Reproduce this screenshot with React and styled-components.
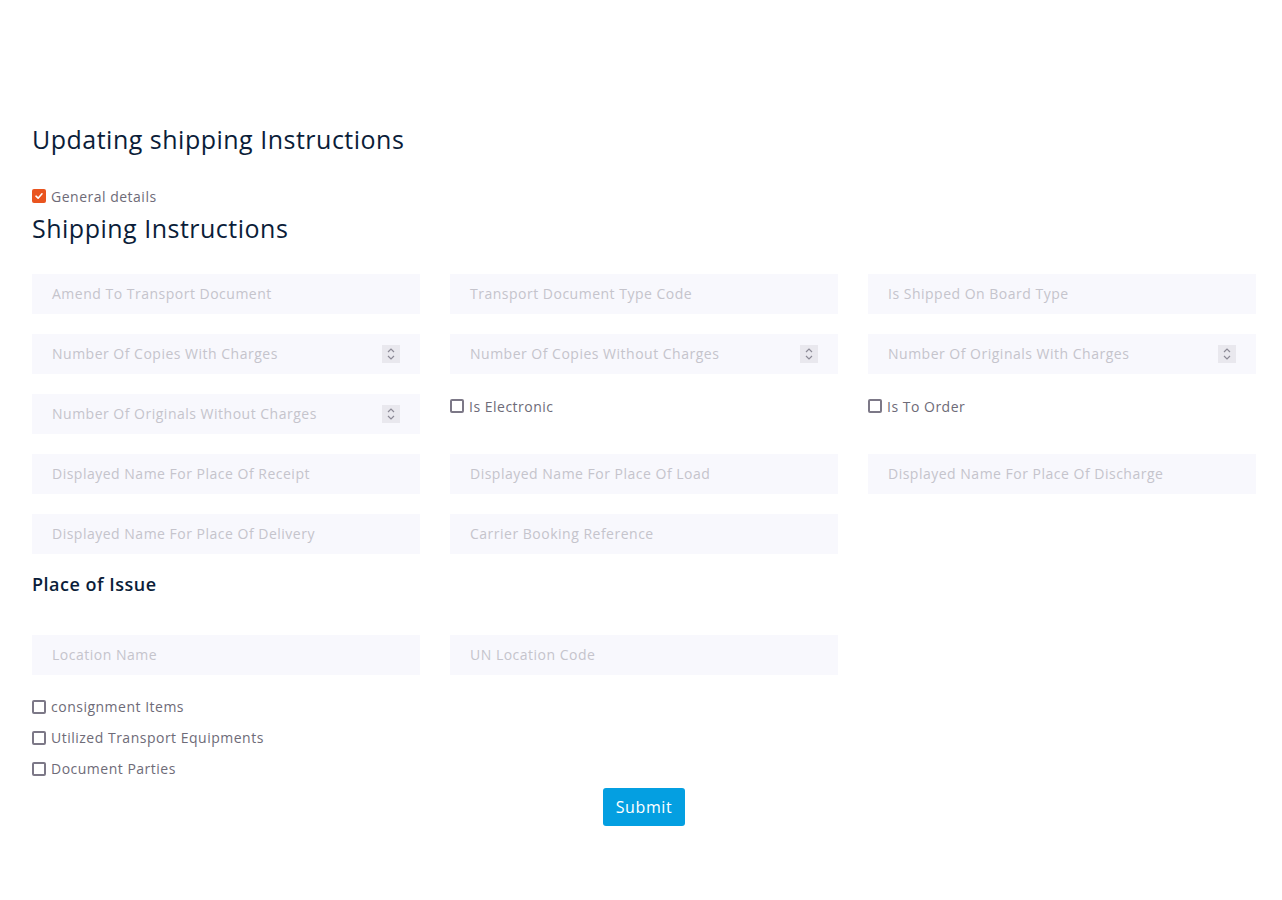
import React from 'react';
import styled, { createGlobalStyle } from 'styled-components';

const GlobalStyle = createGlobalStyle`
  body {
    margin: 0;
    background: #ffffff;
    font-family: "Open Sans", "Liberation Sans", sans-serif;
    letter-spacing: 0.5px;
  }
`;

const Page = styled.div`
  padding: 124px 26px 60px 32px;
`;

const PageTitle = styled.h1`
  margin: 0;
  font-size: 25px;
  line-height: 30px;
  font-weight: 500;
  color: #0b1d39;
`;

const SectionTitle = styled.h2`
  margin: 7px 0 0;
  font-size: 25px;
  line-height: 30px;
  font-weight: 500;
  color: #0b1d39;
`;

const SubTitle = styled.h3`
  margin: 18px 0 0;
  font-size: 18px;
  line-height: 24px;
  font-weight: 600;
  color: #0b1d39;
`;

const CheckRow = styled.label`
  display: flex;
  align-items: center;
  gap: 5px;
  height: ${(p) => p.$h || 31}px;
  font-size: 14px;
  color: #6e6b78;
  margin-top: ${(p) => p.$mt || 0}px;
`;

const Box = styled.span`
  width: 14px;
  height: 14px;
  box-sizing: border-box;
  border-radius: 2px;
  border: ${(p) => (p.$checked ? 'none' : '2px solid #7c7887')};
  background: ${(p) => (p.$checked ? '#e9541f' : 'transparent')};
  display: inline-flex;
  align-items: center;
  justify-content: center;
  flex-shrink: 0;
`;

const Grid = styled.div`
  display: grid;
  grid-template-columns: repeat(3, 388px);
  column-gap: 30px;
  row-gap: 20px;
  margin-top: ${(p) => p.$mt || 0}px;
`;

const Field = styled.div`
  height: 40px;
  box-sizing: border-box;
  background: #f8f8fd;
  display: flex;
  align-items: center;
  justify-content: space-between;
  padding: 0 20px 1px;
  font-size: 14px;
  color: #c5c4cc;
`;

const CheckCell = styled.div`
  height: 40px;
  display: flex;
  align-items: flex-start;
  padding-top: 4px;
  box-sizing: border-box;
`;

const Stepper = styled.span`
  width: 18px;
  height: 18px;
  margin-top: 1px;
  background: #e9e8ee;
  display: inline-flex;
  align-items: center;
  justify-content: center;
`;

const Checks = styled.div`
  margin-top: 16px;
  display: flex;
  flex-direction: column;
`;

const Actions = styled.div`
  display: flex;
  justify-content: center;
  margin-top: 4px;
`;

const SubmitButton = styled.button`
  background: #049fe1;
  color: #ffffff;
  border: none;
  border-radius: 3px;
  height: 38px;
  padding: 0 13px;
  font-family: inherit;
  font-size: 16px;
  letter-spacing: 0.6px;
`;

const Check = ({ checked }) => (
  <Box $checked={checked}>
    {checked && (
      <svg width="10" height="10" viewBox="0 0 10 10">
        <path d="M2 5.2 L4.1 7.2 L8 2.8" fill="none" stroke="#fff" strokeWidth="1.6" strokeLinecap="round" strokeLinejoin="round" />
      </svg>
    )}
  </Box>
);

const StepIcon = () => (
  <Stepper>
    <svg width="12" height="14" viewBox="0 0 12 14">
      <path d="M3 5 L6 2 L9 5 M3 9 L6 12 L9 9" fill="none" stroke="#8c8a96" strokeWidth="1.2" />
    </svg>
  </Stepper>
);

const Input = ({ label, number }) => (
  <Field>
    <span>{label}</span>
    {number && <StepIcon />}
  </Field>
);

const CheckItem = ({ label, checked, h, mt }) => (
  <CheckRow $h={h} $mt={mt}>
    <Check checked={checked} />
    {label}
  </CheckRow>
);

export default function App() {
  return (
    <Page>
      <GlobalStyle />
      <PageTitle>Updating shipping Instructions</PageTitle>
      <CheckItem label="General details" checked h={20} mt={32} />
      <SectionTitle>Shipping Instructions</SectionTitle>
      <Grid $mt={31}>
        <Input label="Amend To Transport Document" />
        <Input label="Transport Document Type Code" />
        <Input label="Is Shipped On Board Type" />
        <Input label="Number Of Copies With Charges" number />
        <Input label="Number Of Copies Without Charges" number />
        <Input label="Number Of Originals With Charges" number />
        <Input label="Number Of Originals Without Charges" number />
        <CheckCell><CheckItem label="Is Electronic" h={16} /></CheckCell>
        <CheckCell><CheckItem label="Is To Order" h={16} /></CheckCell>
        <Input label="Displayed Name For Place Of Receipt" />
        <Input label="Displayed Name For Place Of Load" />
        <Input label="Displayed Name For Place Of Discharge" />
        <Input label="Displayed Name For Place Of Delivery" />
        <Input label="Carrier Booking Reference" />
      </Grid>
      <SubTitle>Place of Issue</SubTitle>
      <Grid $mt={39}>
        <Input label="Location Name" />
        <Input label="UN Location Code" />
      </Grid>
      <Checks>
        <CheckItem label="consignment Items" />
        <CheckItem label="Utilized Transport Equipments" />
        <CheckItem label="Document Parties" />
      </Checks>
      <Actions>
        <SubmitButton>Submit</SubmitButton>
      </Actions>
    </Page>
  );
}
